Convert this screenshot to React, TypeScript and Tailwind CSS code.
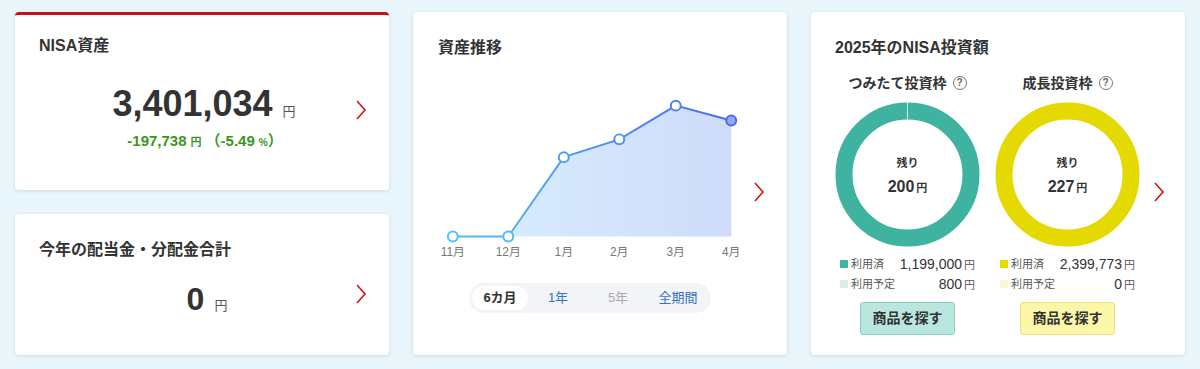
import React from 'react';

const FONT = { fontFamily: '"Liberation Sans", "Noto Sans CJK JP", sans-serif' };

const Chevron: React.FC = () => (
  <svg width="12" height="22" viewBox="0 0 12 22" className="shrink-0">
    <polyline points="2,2 10,11 2,20" fill="none" stroke="#d0121b" strokeWidth="1.6" />
  </svg>
);

const Help: React.FC = () => (
  <span className="inline-flex w-[14px] h-[14px] rounded-full border border-[#777] text-[#666] text-[10px] leading-none items-center justify-center ml-[6px]">?</span>
);

// chart points in svg coords
const points = [
  { x: 22, y: 147, label: '11月' },
  { x: 78, y: 147, label: '12月' },
  { x: 134, y: 67, label: '1月' },
  { x: 190, y: 49, label: '2月' },
  { x: 247, y: 15, label: '3月' },
  { x: 303, y: 30, label: '4月' },
];

const Chart: React.FC = () => {
  const line = points.map(p => `${p.x},${p.y}`).join(' ');
  const area = `${points[1].x},147 ${points.slice(1).map(p => `${p.x},${p.y}`).join(' ')} 303,147`;
  return (
    <svg width="330" height="172" viewBox="0 0 330 172">
      <defs>
        <linearGradient id="areaG" x1="0" x2="1" y1="0" y2="0">
          <stop offset="0%" stopColor="#d6ebfd" />
          <stop offset="100%" stopColor="#cfdbfa" />
        </linearGradient>
        <linearGradient id="lineG" x1="0" x2="1" y1="0" y2="0">
          <stop offset="0%" stopColor="#58bdf7" />
          <stop offset="100%" stopColor="#4a6bee" />
        </linearGradient>
      </defs>
      <polygon points={area} fill="url(#areaG)" />
      <polyline points={line} fill="none" stroke="url(#lineG)" strokeWidth="2" />
      {points.map((p, i) => {
        const last = i === points.length - 1;
        const stroke = ['#52bff8', '#52b9f7', '#4aa0f3', '#4b90f2', '#4a80f0', '#4a6aee'][i];
        return (
          <circle key={p.label} cx={p.x} cy={p.y} r="5" fill={last ? '#92a8f5' : '#fff'} stroke={stroke} strokeWidth="2" />
        );
      })}
      {points.map(p => (
        <text key={p.label + 't'} x={p.x} y="167" textAnchor="middle" fontSize="12" fill="#777" style={FONT}>{p.label}</text>
      ))}
    </svg>
  );
};

const Donut: React.FC<{ color: string; rest: string }> = ({ color, rest }) => (
  <div className="relative w-[145px] h-[145px]">
    <svg width="145" height="145" viewBox="0 0 145 145">
      <circle cx="72.5" cy="72.5" r="63.5" fill="none" stroke={color} strokeWidth="17" />
      <line x1="72.5" y1="0" x2="72.5" y2="17" stroke="#cfeee8" strokeWidth={color === '#3eb3a0' ? 1 : 0} />
    </svg>
    <div className="absolute inset-0 flex flex-col items-center justify-center">
      <span className="text-[11px] font-bold text-[#333] leading-[14px] mt-[4px]">残り</span>
      <span className="mt-[8px] text-[#333] font-bold leading-[18px]">
        <span className="text-[16px]">{rest}</span>
        <span className="text-[11px] ml-[2px]">円</span>
      </span>
    </div>
  </div>
);

const Legend: React.FC<{ sq: string; label: string; value: string }> = ({ sq, label, value }) => (
  <div className="flex items-center h-[18px] px-[5px]">
    <span className="w-[8px] h-[8px] mr-[3px]" style={{ backgroundColor: sq }} />
    <span className="text-[11px] text-[#555]">{label}</span>
    <span className="ml-auto text-[14px] text-[#333]">{value}</span>
    <span className="text-[11px] text-[#555] ml-[2px] mt-[2px]">円</span>
  </div>
);

const App: React.FC = () => {
  return (
    <div className="w-[1200px] h-[369px] bg-[#e9f6fc] pl-[15px] pt-[12px] flex gap-[24px]" style={FONT}>
      {/* left column */}
      <div className="flex flex-col gap-[24px] w-[374px]">
        <div className="h-[178px] bg-white rounded-[4px] border-t-[3px] border-[#c8101b] shadow-[0_1px_4px_rgba(0,0,0,0.12)] pt-[21px] pl-[24px] pr-[22px] flex flex-col">
          <h3 className="text-[16px] font-bold text-[#333] leading-[20px]">NISA資産</h3>
          <div className="flex items-center mt-[26px]">
            <div className="flex-1 flex flex-col items-center">
              <div className="flex items-baseline text-[#333] ml-[14px]">
                <span className="text-[36px] font-bold leading-[44px]">3,401,034</span>
                <span className="text-[13px] text-[#555] ml-[10px]">円</span>
              </div>
              <div className="mt-[4px] ml-[16px] text-[#3a961e] font-bold flex items-baseline">
                <span className="text-[15px]">-197,738</span>
                <span className="text-[11px] ml-[4px]">円</span>
                <span className="text-[15px] ml-[4px]">（-5.49</span>
                <span className="text-[10px] ml-[4px]">%</span>
                <span className="text-[15px]">）</span>
              </div>
            </div>
            <div className="mt-[-14px]"><Chevron /></div>
          </div>
        </div>
        <div className="h-[141px] bg-white rounded-[4px] shadow-[0_1px_4px_rgba(0,0,0,0.12)] pt-[26px] pl-[24px] pr-[22px] flex flex-col">
          <h3 className="text-[16px] font-bold text-[#333] leading-[20px]">今年の配当金・分配金合計</h3>
          <div className="flex items-center mt-[21px]">
            <div className="flex-1 flex justify-center">
              <div className="flex items-baseline text-[#333] ml-[20px]">
                <span className="text-[32px] font-bold leading-[36px]">0</span>
                <span className="text-[13px] text-[#555] ml-[10px]">円</span>
              </div>
            </div>
            <div className="mt-[-10px]"><Chevron /></div>
          </div>
        </div>
      </div>

      {/* chart card */}
      <div className="w-[374px] h-[343px] bg-white rounded-[4px] shadow-[0_1px_4px_rgba(0,0,0,0.12)] pt-[26px] pl-[25px] pr-[22px] flex flex-col">
        <h3 className="text-[16px] font-bold text-[#333] leading-[20px]">資産推移</h3>
        <div className="flex items-start mt-[32px] ml-[-7px]">
          <Chart />
          <div className="mt-[91px] ml-[-5px]"><Chevron /></div>
        </div>
        <div className="ml-[31px] mt-[21px] self-start flex items-center bg-[#f3f4f7] rounded-full p-[3px] h-[30px]">
          <span className="w-[56px] h-[24px] rounded-full bg-white flex items-center justify-center text-[13px] font-bold text-[#333]">6カ月</span>
          <span className="w-[60px] text-center text-[13px] text-[#3470c4]">1年</span>
          <span className="w-[60px] text-center text-[13px] text-[#aaa]">5年</span>
          <span className="w-[60px] text-center text-[13px] text-[#3470c4]">全期間</span>
        </div>
      </div>

      {/* NISA investment card */}
      <div className="w-[374px] h-[343px] bg-white rounded-[4px] shadow-[0_1px_4px_rgba(0,0,0,0.12)] pt-[26px] pl-[24px] flex flex-col">
        <h3 className="text-[16px] font-bold text-[#333] leading-[20px]">2025年のNISA投資額</h3>
        <div className="flex items-start mt-[15px]">
          <div className="w-[145px] flex flex-col">
            <div className="flex items-center justify-center h-[20px] text-[14px] font-bold text-[#333]">つみたて投資枠<Help /></div>
            <div className="mt-[9px]"><Donut color="#3eb3a0" rest="200" /></div>
            <div className="mt-[8px]">
              <Legend sq="#3eb3a0" label="利用済" value="1,199,000" />
              <div className="mt-[2px]"><Legend sq="#d8efeb" label="利用予定" value="800" /></div>
            </div>
            <button className="mt-[9px] self-center w-[95px] h-[33px] rounded-[3px] bg-[#b9e6df] border border-[#86d1c5] text-[14px] font-bold text-[#333]">商品を探す</button>
          </div>
          <div className="w-[145px] flex flex-col ml-[15px]">
            <div className="flex items-center justify-center h-[20px] text-[14px] font-bold text-[#333]">成長投資枠<Help /></div>
            <div className="mt-[9px]"><Donut color="#e4d900" rest="227" /></div>
            <div className="mt-[8px]">
              <Legend sq="#e4d900" label="利用済" value="2,399,773" />
              <div className="mt-[2px]"><Legend sq="#fbf8d4" label="利用予定" value="0" /></div>
            </div>
            <button className="mt-[9px] self-center w-[95px] h-[33px] rounded-[3px] bg-[#fbf6a8] border border-[#ece07a] text-[14px] font-bold text-[#333]">商品を探す</button>
          </div>
          <div className="mt-[108px] ml-[13px]"><Chevron /></div>
        </div>
      </div>
    </div>
  );
};

export default App;
